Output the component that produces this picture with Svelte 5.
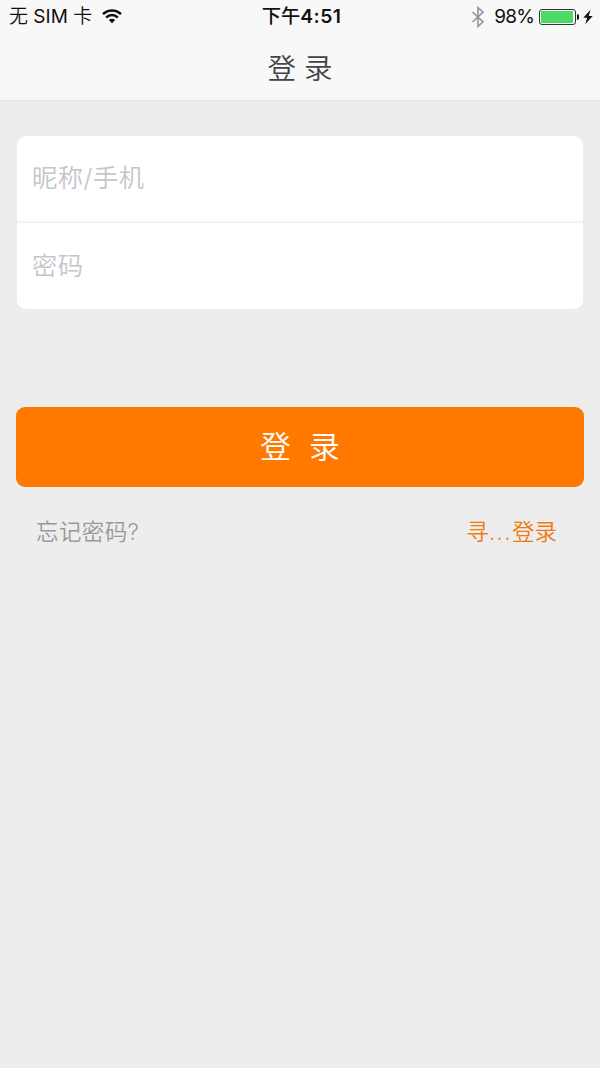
<script lang="ts">
	let nickname = $state('');
	let password = $state('');
	let battery = $state(98);

	function submit(event: SubmitEvent) {
		event.preventDefault();
	}
</script>

<div class="screen">
	<header>
		<div class="status">
			<div class="carrier">
				<span>无 <span class="latin">SIM</span> 卡</span>
				<svg class="wifi" width="20" height="15" viewBox="0 0 20 15">
					<path d="M1 5.2C6.1 .2 13.9 .2 19 5.2" />
					<path d="M4.2 8.5C7.6 5.2 12.4 5.2 15.8 8.5" />
					<path class="dot" d="M6.8 10.9C8.6 9.2 11.4 9.2 13.2 10.9L10 14.2Z" />
				</svg>
			</div>
			<time>下午<b>4:51</b></time>
			<div class="power">
				<svg class="bluetooth" width="14" height="22" viewBox="0 0 14 22">
					<path d="M1.5 6L12 15.8L7 20.4V1.6L12 6.2L1.5 16" />
				</svg>
				<span class="percent latin">{battery}%</span>
				<div class="battery">
					<div class="level" style="width: {battery}%"></div>
				</div>
				<svg class="bolt" width="10" height="16" viewBox="0 0 10 16">
					<path d="M7.6 .8L.3 8.8H4.2L2.2 15.2L9.7 6.9H5.7Z" />
				</svg>
			</div>
		</div>
		<h1>登 录</h1>
	</header>

	<form onsubmit={submit}>
		<div class="fields">
			<input type="text" placeholder="昵称/手机" bind:value={nickname} />
			<input type="password" placeholder="密码" bind:value={password} />
		</div>
		<button type="submit">登<span class="gap"></span>录</button>
	</form>

	<nav>
		<a class="forgot" href="#forgot">忘记密码?</a>
		<a class="alternate" href="#alternate">寻<span class="dots">...</span>登录</a>
	</nav>
</div>

<style>
	:global(body) {
		margin: 0;
		background: #ededed;
	}

	.screen {
		box-sizing: border-box;
		width: 100%;
		min-height: 1068px;
		background: #ededed;
		font-family: 'Inter', 'Noto Sans CJK SC', sans-serif;
		font-weight: 350;
	}

	header {
		box-sizing: border-box;
		height: 101px;
		background: #f8f8f8;
		border-bottom: 1px solid #e6e6e6;
	}

	.status {
		display: grid;
		grid-template-columns: 1fr auto 1fr;
		align-items: center;
		height: 33px;
		padding: 0 7px 0 9px;
		color: #111;
		font-size: 19px;
		line-height: 33px;
	}

	.carrier,
	.power {
		display: flex;
		align-items: center;
		white-space: nowrap;
	}

	.power {
		justify-content: flex-end;
	}

	.latin {
		font-weight: 400;
	}

	time {
		padding-left: 1px;
		font-size: 19.3px;
		font-weight: 500;
	}

	time b {
		font-weight: 600;
		letter-spacing: 0.4px;
	}

	.wifi {
		margin-left: 10px;
		fill: none;
		stroke: #111;
		stroke-width: 2.5;
	}

	.wifi .dot {
		fill: #111;
		stroke: none;
	}

	.bluetooth {
		margin-right: 9px;
		fill: none;
		stroke: #999;
		stroke-width: 1.7;
	}

	.percent {
		letter-spacing: -0.8px;
	}

	.battery {
		position: relative;
		box-sizing: border-box;
		width: 37px;
		height: 16px;
		margin: 0 7px 0 5px;
		padding: 1px;
		border: 1px solid #333;
		border-radius: 3px;
	}

	.battery::after {
		content: '';
		position: absolute;
		top: 4px;
		right: -4px;
		width: 2px;
		height: 6px;
		border-radius: 0 2px 2px 0;
		background: #111;
	}

	.level {
		height: 100%;
		border-radius: 1px;
		background: #4cd964;
	}

	.bolt {
		fill: #111;
	}

	h1 {
		margin: 0;
		color: #444;
		font-size: 28.5px;
		font-weight: 350;
		line-height: 72px;
		text-align: center;
	}

	form {
		padding: 35px 16px 0;
	}

	.fields {
		margin: 0 1px;
		border-radius: 9px;
		background: #fff;
		overflow: hidden;
	}

	input {
		display: block;
		box-sizing: border-box;
		width: 100%;
		height: 85px;
		padding: 0 15px 2px;
		border: 0;
		outline: 0;
		background: transparent;
		color: #444;
		font: inherit;
		font-size: 25.3px;
		letter-spacing: 0.5px;
	}

	input + input {
		height: 88px;
		padding-bottom: 1px;
		border-top: 2px solid #f3f3f3;
	}

	input::placeholder {
		color: #c5c5cc;
		opacity: 1;
	}

	button {
		display: block;
		width: 100%;
		height: 80px;
		margin-top: 98px;
		padding: 0;
		border: 0;
		border-radius: 9px;
		background: #ff7800;
		color: #fff;
		font: inherit;
		font-size: 31px;
		line-height: 80px;
	}

	.gap {
		display: inline-block;
		width: 18px;
	}

	nav {
		display: flex;
		justify-content: space-between;
		padding: 28px 43px 0 36px;
		font-size: 22.5px;
		line-height: 34px;
	}

	a {
		text-decoration: none;
	}

	.forgot {
		color: #999;
		letter-spacing: 0.4px;
	}

	.alternate {
		color: #ef7a12;
	}

	.dots {
		letter-spacing: 1.4px;
	}
</style>
